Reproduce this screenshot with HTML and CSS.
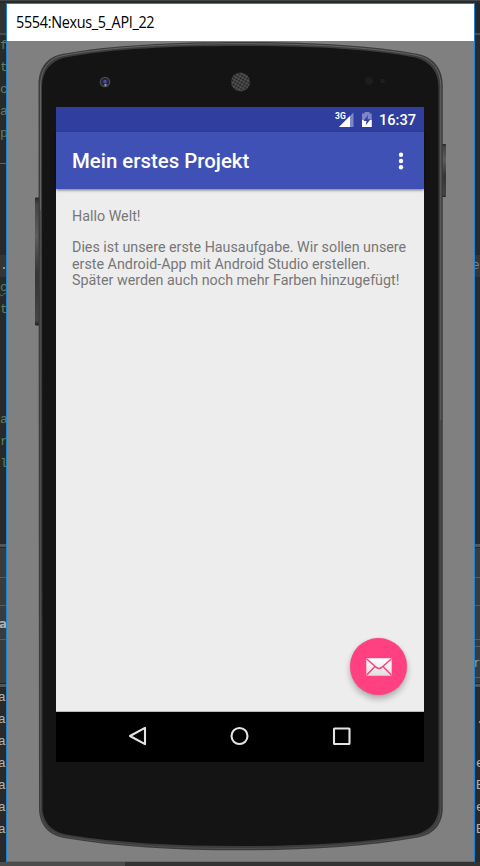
FILE: index.html
```html
<!DOCTYPE html>
<html lang="de">
<head>
<meta charset="utf-8">
<title>5554:Nexus_5_API_22</title>
<link rel="stylesheet" href="styles.css">
</head>
<body>
<div class="desktop">
  <div class="top-edge"></div>
  <aside class="strip left">
    <div class="tabs"></div>
    <div class="editor">
      <span>f</span><span>t</span><span>c</span><span>a</span><span>p</span><span class="rule"></span><span></span><span></span><span></span><span></span><span class="current">.</span><span class="wavy">c</span><span>t</span><span></span><span></span><span></span><span></span><span>a</span><span>r</span><span>l</span>
    </div>
    <div class="divider"></div>
    <div class="pane p1"></div><div class="pane p2"></div><div class="pane p3"><b>a</b></div><div class="pane p4"></div>
    <div class="divider low"></div>
    <div class="console"><span>a</span><span>a</span><span>a</span><span>a</span><span>a</span><span>a</span><span>a</span></div>
  </aside>
  <main class="window">
    <header class="caption"><span>5554:Nexus_5_API_22</span></header>
    <div class="stage">
      <svg class="phone" width="467" height="820" viewBox="7 41 467 820">
        <defs>
          <linearGradient id="key" x1="0" y1="0" x2="0" y2="1">
            <stop offset="0" stop-color="#252525"/><stop offset=".05" stop-color="#454545"/><stop offset=".3" stop-color="#5d5d5d"/><stop offset=".6" stop-color="#353535"/><stop offset=".96" stop-color="#444"/><stop offset="1" stop-color="#202020"/>
          </linearGradient>
          <pattern id="mesh" width="3" height="3" patternUnits="userSpaceOnUse" patternTransform="rotate(30)">
            <rect width="3" height="3" fill="#555"/><circle cx="1.5" cy="1.5" r="1.1" fill="#171717"/>
          </pattern>
        </defs>
        <rect x="35" y="197.500" width="5" height="128" rx="1" fill="url(#key)"/>
        <rect x="441" y="144" width="5" height="53" rx="1" fill="url(#key)"/>
        <path fill="#3b3c3d" d="M38.500 85C38.500 68 47 57 62 54C110 45 175 42 240 42C305 42 370 45 418 54C433 57 442.800 68 442.800 86V808C442.800 824 434 834.500 418 837.500C365 847 305 850.300 240 850.300C175 850.300 116 847 64 838C48 835 39 824 39 808Z"/>
        <path fill="none" stroke="#626364" stroke-width="1" d="M40.500 210V86C40.500 69 49 58.500 63 55.500C111 46.500 175 43.700 240 43.700C305 43.700 369 46.500 417 55.500C431 58.500 440.800 69 440.800 86V420"/>
        <path fill="none" stroke="#4d4e4f" stroke-width="1" d="M40.500 210V808C40.500 823 49 833.500 65 836.500C116 845.500 175 848.500 240 848.500C305 848.500 364 845.500 417 836C432 833.500 440.800 823 440.800 808V420"/>
        <path fill="#141414" d="M42 87C42 71 51 61 65 57.500C112 48.500 175 46 240 46C305 46 368 48.500 415 57.500C429 61 438.500 71 438.500 87V807C438.500 821 430 831 415 834.500C363 843 304 846 240 846C176 846 118 843 66 834.500C51 831.500 42.500 821 42.500 807Z"/>
        <circle cx="105" cy="82" r="5.300" fill="#4c4c4c"/><circle cx="105" cy="82" r="4" fill="#25253a"/><circle cx="105" cy="81.500" r="1.800" fill="#4a4aae"/><circle cx="105.500" cy="85" r="1.200" fill="#999"/>
        <circle cx="240.500" cy="82" r="9.500" fill="url(#mesh)"/>
        <circle cx="369" cy="81" r="4" fill="#1d1d1f"/><circle cx="382.500" cy="81" r="2.300" fill="#202022"/>
      </svg>
      <section class="screen">
        <div class="status">
          <svg width="40" height="17" viewBox="334 111 40 17">
            <path fill="#7e87c5" d="M353.500 112.500V127H339Z"/><path fill="#fff" d="M350 116V127H339Z"/>
            <path fill="#7e87c5" d="M364.500 112h5v1.500h2.200V127h-9.700v-13.500h2.500z"/>
            <path fill="#fff" d="M362 120h9.700v7H362z"/><path fill="#303f9f" d="M368 115l-4.500 6h3l-.7 4.200 4.700-6h-3z"/>
          </svg>
          <small>3G</small>
          <time>16:37</time>
        </div>
        <div class="appbar"><h1>Mein erstes Projekt</h1>
          <svg width="6" height="20" viewBox="0 0 6 20" fill="#fff"><circle cx="3" cy="3.800" r="2.200"/><circle cx="3" cy="10" r="2.200"/><circle cx="3" cy="16.200" r="2.200"/></svg>
        </div>
        <div class="content">
          <p class="hello">Hallo Welt!</p>
          <p class="task"><span>Dies ist unsere erste Hausaufgabe. Wir sollen unsere</span><br><span>erste Android-App mit Android Studio erstellen.</span><br><span>Später werden auch noch mehr Farben hinzugefügt!</span></p>
          <div class="fab">
            <svg width="26" height="18" viewBox="0 0 26 18"><defs><linearGradient id="mail" x1="0" y1="0" x2="0" y2="1"><stop offset="0" stop-color="#fff"/><stop offset="1" stop-color="#dedede"/></linearGradient></defs><rect x=".3" y=".3" width="25.400" height="17.400" rx=".8" fill="url(#mail)"/><path d="M.5 .7L9.500 8.700Q13 12.200 16.500 8.700L25.500 .7M.7 17L9 8.500M25.300 17L17 8.500" fill="none" stroke="#ff4081" stroke-width="1.500"/></svg>
          </div>
        </div>
        <nav class="nav">
          <svg width="368" height="50" viewBox="56 712 368 50" fill="none" stroke="#e4e4e4" stroke-width="2.100" stroke-linejoin="round"><path d="M145 727.800V744.200L130 736Z"/><circle cx="239.500" cy="736" r="8"/><rect x="334" y="728.500" width="15.500" height="15.500" rx=".5"/></svg>
        </nav>
      </section>
    </div>
  </main>
  <aside class="strip right">
    <div class="tabs"></div>
    <div class="editor"><span></span><span></span><span></span><span></span><span></span><span></span><span></span><span></span><span></span><span></span><span class="current">e</span></div>
    <div class="divider"></div>
    <div class="pane p1"></div><div class="pane p2"></div><div class="pane p3"></div><div class="pane p4"><i>rl</i></div>
    <div class="divider low"></div>
    <div class="console"><span></span><span>.</span><span></span><span>e</span><span>E</span><span>e</span><span>E</span></div>
  </aside>
  <footer class="scroll"><div></div></footer>
</div>
</body>
</html>
```
FILE: styles.css
```css
* { box-sizing: border-box; }
body { margin: 0; background: #2b2b2b; font-family: Roboto, sans-serif; }
h1, p { margin: 0; font-weight: 400; }
svg { display: block; }
.desktop { width: 480px; height: 866px; overflow: hidden; display: grid; grid-template-columns: 6px 469px 5px; grid-template-rows: 3px 859px 4px; }
.top-edge { grid-column: 1 / -1; background: #404746; border-bottom: 2px solid #292b2c; }
.strip { overflow: hidden; background: #292929; font-family: "Liberation Mono", monospace; font-size: 13px; }
.tabs { height: 32px; background: #303334; border-bottom: 2px solid #4a4b4c; }
.right .tabs { background: #252728; }
.editor { height: 509px; color: #5f7f51; }
.strip span { display: block; height: 22px; line-height: 22px; white-space: nowrap; }
.left .editor span { text-indent: 0; }
.left .rule { background: linear-gradient(#57694e, #57694e) 0 18px / 6px 1px no-repeat; }
.strip .current { background: #353535; color: #b2b2a9; text-indent: 1px; }
.wavy { text-decoration: underline wavy #57764b 1px; }
.right .current { text-indent: -3px; color: #85817b; }
.divider { height: 4px; background: #525657; border-bottom: 1px solid #242424; }
.pane { background: #393c3e; border-bottom: 1px solid #585b5c; overflow: hidden; }
.p1 { height: 30px; }
.p2 { height: 28px; }
.p3 { height: 34px; }
.p4 { height: 44px; border-bottom-color: #242424; }
.p3 b { display: block; color: #b0b0b0; line-height: 36px; text-indent: -1px; font-family: "DejaVu Sans", sans-serif; font-size: 12px; }
.right .p4 { padding-top: 6px; }
.right .p4 i { display: block; height: 32px; border: solid #5c5c5c; border-width: 1px 0; line-height: 32px; font-style: normal; font-family: "DejaVu Sans", sans-serif; color: #8797a3; text-indent: -1px; font-size: 13px; }
.console { height: 176px; color: #b3b3b3; margin-top: -1px; }
.left .console span { text-indent: -2px; }
.right .console span { text-indent: 1px; }
.window { border: 1px solid #1883d7; background: #808080; display: flex; flex-direction: column; }
.caption { height: 37px; background: #fff; color: #000; font: 15.500px/37px "Open Sans", sans-serif; padding-left: 9px; flex: none; }
.caption span { display: block; width: max-content; letter-spacing: -.35px; transform: scaleX(.93); transform-origin: left; }
.stage { display: grid; flex: 1; }
.phone, .screen { grid-area: 1 / 1; }
.screen { width: 368px; height: 655px; margin: 66px 0 0 49px; display: flex; flex-direction: column; z-index: 1; }
.status { height: 25px; background: #303f9f; color: #fff; position: relative; display: flex; align-items: center; justify-content: flex-end; gap: 5px; padding-right: 8px; flex: none; }
.status small { position: absolute; left: 279px; top: 4px; font: 700 8.500px/10px Roboto, sans-serif; }
.status time { font-size: 14.600px; font-weight: 500; line-height: 25px; padding-top: 2px; }
.appbar { height: 57px; background: #3f51b5; color: #fff; display: flex; align-items: center; justify-content: space-between; padding: 0 20px 0 16px; box-shadow: 0 1px 3px #0008; z-index: 1; flex: none; }
h1 { font-size: 20.400px; font-weight: 500; line-height: 55px; padding-top: 2px; }
.content { height: 523px; background: #ededed; color: #777; padding: 19px 16px 0; font-size: 14.300px; line-height: 17px; flex: none; position: relative; border-bottom: 1px solid #b9bcbc; }
.task { margin-top: 14px; line-height: 16.700px; white-space: nowrap; }
.fab { position: absolute; right: 17px; bottom: 16px; width: 57px; height: 57px; border-radius: 50%; background: #ff4081; display: grid; place-items: center; box-shadow: 0 4px 6px #0004, 0 0 2px #0002; }
.nav { height: 50px; background: #000; }
.scroll { grid-column: 1 / -1; background: #333; }
.scroll div { width: 125px; height: 4px; background: #4c4c4c; }
```
